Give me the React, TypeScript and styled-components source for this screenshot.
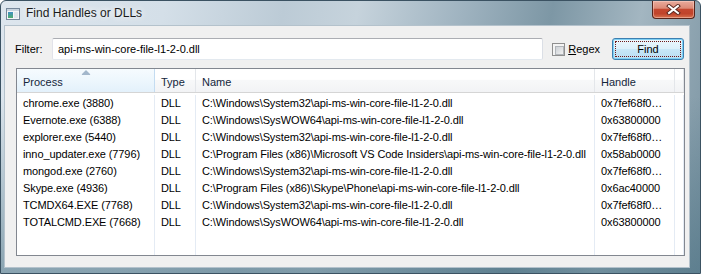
import React from 'react'
import styled, { createGlobalStyle } from 'styled-components'

const GlobalStyle = createGlobalStyle`
  html, body {
    margin: 0;
    padding: 0;
    background: #ffffff;
  }
  body {
    font-family: 'Liberation Sans', Arial, sans-serif;
  }
`

const rows = [
  ['chrome.exe (3880)', 'C:\\Windows\\System32\\api-ms-win-core-file-l1-2-0.dll', '0x7fef68f0…'],
  ['Evernote.exe (6388)', 'C:\\Windows\\SysWOW64\\api-ms-win-core-file-l1-2-0.dll', '0x63800000'],
  ['explorer.exe (5440)', 'C:\\Windows\\System32\\api-ms-win-core-file-l1-2-0.dll', '0x7fef68f0…'],
  ['inno_updater.exe (7796)', 'C:\\Program Files (x86)\\Microsoft VS Code Insiders\\api-ms-win-core-file-l1-2-0.dll', '0x58ab0000'],
  ['mongod.exe (2760)', 'C:\\Windows\\System32\\api-ms-win-core-file-l1-2-0.dll', '0x7fef68f0…'],
  ['Skype.exe (4936)', 'C:\\Program Files (x86)\\Skype\\Phone\\api-ms-win-core-file-l1-2-0.dll', '0x6ac40000'],
  ['TCMDX64.EXE (7768)', 'C:\\Windows\\System32\\api-ms-win-core-file-l1-2-0.dll', '0x7fef68f0…'],
  ['TOTALCMD.EXE (7668)', 'C:\\Windows\\SysWOW64\\api-ms-win-core-file-l1-2-0.dll', '0x63800000'],
]

const columns = '138px 41px 399px 80px 1fr'

const AppIcon = () => (
  <svg width="16" height="14" viewBox="0 0 16 14">
    <defs>
      <linearGradient id="pane" x1="0" y1="0" x2="0" y2="1">
        <stop offset="0" stopColor="#3f8fc4" />
        <stop offset="1" stopColor="#4fae6c" />
      </linearGradient>
    </defs>
    <rect x="1.5" y="1.5" width="13" height="11" fill="#f3f5f7" stroke="#75879a" />
    <rect x="2" y="2" width="12" height="2" fill="#c7d3de" />
    <rect x="3" y="5" width="5" height="6" fill="url(#pane)" />
    <rect x="9" y="5" width="4" height="6" fill="#dfe6ec" />
  </svg>
)

const CloseGlyph = () => (
  <svg width="15" height="11" viewBox="0 0 15 11">
    <path d="M3 2 L12 9 M12 2 L3 9" stroke="#5a2a22" strokeWidth="4" strokeLinecap="square" />
    <path d="M3 2 L12 9 M12 2 L3 9" stroke="#ffffff" strokeWidth="2" strokeLinecap="square" />
  </svg>
)

const SortArrow = () => (
  <svg width="9" height="5" viewBox="0 0 9 5">
    <path d="M0.5 4.5 L4.5 0.5 L8.5 4.5 Z" fill="#a3b7cc" stroke="#8aa2bb" strokeWidth="0.6" />
  </svg>
)

const App = () => {
  return (
    <>
      <GlobalStyle />
      <Window>
        <TitleBar>
          <TitleIcon>
            <AppIcon />
          </TitleIcon>
          <Caption>Find Handles or DLLs</Caption>
          <CloseButton>
            <CloseGlyph />
          </CloseButton>
        </TitleBar>

        <Client>
          <FilterRow>
            <FieldLabel>Filter:</FieldLabel>
            <TextBox>api-ms-win-core-file-l1-2-0.dll</TextBox>
            <CheckLabel>
              <CheckBox>
                <span />
              </CheckBox>
              <span>
                <u>R</u>egex
              </span>
            </CheckLabel>
            <FindButton>Find</FindButton>
          </FilterRow>

          <ListView>
            <HeaderRow>
              <HeaderCell $sorted>
                <ArrowSlot>
                  <SortArrow />
                </ArrowSlot>
                Process
              </HeaderCell>
              <HeaderCell>Type</HeaderCell>
              <HeaderCell>Name</HeaderCell>
              <HeaderCell>Handle</HeaderCell>
              <HeaderCell />
            </HeaderRow>
            <Body>
              {rows.map(([proc, name, handle]) => (
                <Row key={proc}>
                  <Cell>{proc}</Cell>
                  <Cell>DLL</Cell>
                  <Cell>{name}</Cell>
                  <Cell>{handle}</Cell>
                  <Cell />
                </Row>
              ))}
              <Filler>
                <Cell />
                <Cell />
                <Cell />
                <Cell />
                <Cell />
              </Filler>
            </Body>
          </ListView>
        </Client>
      </Window>
    </>
  )
}

const Window = styled.div`
  width: 701px;
  height: 274px;
  box-sizing: border-box;
  display: flex;
  flex-direction: column;
  border: 1px solid #3b5262;
  border-radius: 6px 6px 0 0;
  background: linear-gradient(to bottom, rgba(70, 110, 128, 0) 35%, rgba(70, 110, 128, 0.55) 100%),
    linear-gradient(100deg, #dde6ee 0%, #d4dfe8 22%, #bccbd6 38%, #c6d3dc 48%, #9fb3c0 62%, #7d97a5 74%,
      #a3b6c1 86%, #7a93a1 100%);
  overflow: hidden;
`

const TitleBar = styled.div`
  height: 24px;
  display: flex;
  align-items: flex-start;
  padding: 0 5px 0 4px;
`

const TitleIcon = styled.div`
  margin-top: 6px;
  width: 16px;
  height: 14px;
`

const Caption = styled.div`
  margin: 5px 0 0 5px;
  font-size: 12px;
  line-height: 15px;
  color: #1b1b1b;
  text-shadow: 0 0 6px rgba(255, 255, 255, 0.95), 0 0 10px rgba(255, 255, 255, 0.8);
`

const CloseButton = styled.div`
  margin-left: auto;
  width: 43px;
  height: 18px;
  box-sizing: border-box;
  border: 1px solid #55241b;
  border-top: none;
  border-radius: 0 0 4px 4px;
  display: flex;
  align-items: center;
  justify-content: center;
  background: linear-gradient(#e8ab9c 0%, #dc8a77 42%, #c4472f 50%, #c0442b 75%, #d8734f 100%);
  box-shadow: inset 0 0 0 1px rgba(255, 220, 210, 0.45);
`

const Client = styled.div`
  flex: 1;
  margin: 0 10px 5px 3px;
  background: #f0f0f0;
  border: 1px solid #b4c2cc;
  display: flex;
  flex-direction: column;
  padding: 12px 4px 11px 10px;
`

const FilterRow = styled.div`
  height: 22px;
  display: flex;
  align-items: center;
  padding-right: 1px;
  font-size: 11px;
  color: #000;
`

const FieldLabel = styled.span`
  width: 37px;
`

const TextBox = styled.div`
  flex: 1;
  height: 22px;
  box-sizing: border-box;
  display: flex;
  align-items: center;
  padding-left: 5px;
  background: #fff;
  border: 1px solid;
  border-color: #abadb3 #dbdfe6 #e3e9ef #e2e3ea;
  border-radius: 2px;
`

const CheckLabel = styled.label`
  margin-left: 9px;
  display: flex;
  align-items: center;
  gap: 3px;
`

const CheckBox = styled.span`
  width: 13px;
  height: 13px;
  box-sizing: border-box;
  border: 1px solid #8f8f8f;
  background: #f4f4f4;
  padding: 2px;

  span {
    display: block;
    width: 7px;
    height: 7px;
    border: 1px solid #b1b5ba;
    background: linear-gradient(135deg, #cdd1d6, #f1f1f1);
  }
`

const FindButton = styled.div`
  position: relative;
  margin-left: 12px;
  width: 72px;
  height: 22px;
  box-sizing: border-box;
  display: flex;
  align-items: center;
  justify-content: center;
  border: 1px solid #3c7fb1;
  border-radius: 3px;
  background: linear-gradient(#ecf7fd 0%, #dcf0fb 48%, #c8e7f8 52%, #b9def4 100%);
  box-shadow: inset 0 0 0 1px #7fd0f4;

  &::after {
    content: '';
    position: absolute;
    inset: 2px;
    border: 1px dotted #6e1a1a;
  }
`

const ListView = styled.div`
  flex: 1;
  margin: 8px 0 0 1px;
  background: #fff;
  border: 1px solid #828790;
  display: flex;
  flex-direction: column;
  font-size: 11px;
  overflow: hidden;
`

const HeaderRow = styled.div`
  display: grid;
  grid-template-columns: ${columns};
  height: 24px;
  box-sizing: border-box;
  border-bottom: 1px solid #d5d5d5;
`

const HeaderCell = styled.div<{ $sorted?: boolean }>`
  position: relative;
  display: flex;
  align-items: center;
  padding: 3px 0 0 6px;
  color: #14263b;
  border-right: 1px solid ${(p) => (p.$sorted ? '#c4dcf1' : '#e3e6ea')};
  border-left: ${(p) => (p.$sorted ? '1px solid #d6e8f6' : 'none')};
  margin-left: ${(p) => (p.$sorted ? '-1px' : '0')};
  background: ${(p) =>
    p.$sorted
      ? 'linear-gradient(#f6fbfe 0%, #eef7fd 45%, #e3f1fb 100%)'
      : 'linear-gradient(#ffffff 0%, #ffffff 45%, #f7f8f9 50%, #f2f3f5 100%)'};
`

const ArrowSlot = styled.span`
  position: absolute;
  top: 1px;
  left: 50%;
  transform: translateX(-50%);
  display: flex;
`

const Body = styled.div`
  flex: 1;
  display: flex;
  flex-direction: column;
  padding-top: 2px;
`

const Row = styled.div`
  display: grid;
  grid-template-columns: ${columns};
  height: 17px;
  line-height: 17px;
  color: #000;
  letter-spacing: -0.1px;
`

const Filler = styled(Row)`
  flex: 1;
  height: auto;
`

const Cell = styled.div`
  padding-left: 6px;
  white-space: nowrap;
  overflow: hidden;
  border-right: 1px solid #e4ebf4;
`

export default App
